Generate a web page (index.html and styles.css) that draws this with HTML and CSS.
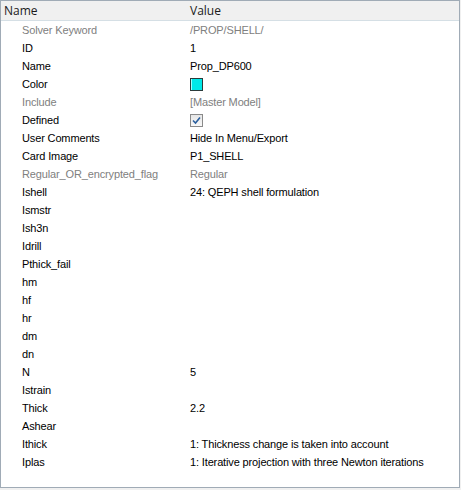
FILE: index.html
```html
<!DOCTYPE html>
<html lang="en">
<head>
  <meta charset="UTF-8">
  <title>Property Table</title>
  <link rel="stylesheet" href="styles.css">
</head>
<body>
  <div class="panel">
    <div class="head">
      <div class="col-name">Name</div>
      <div class="col-value">Value</div>
    </div>

    <div class="rows">
      <div class="row muted"><div class="col-name">Solver Keyword</div><div class="col-value">/PROP/SHELL/</div></div>
      <div class="row"><div class="col-name">ID</div><div class="col-value">1</div></div>
      <div class="row"><div class="col-name">Name</div><div class="col-value">Prop_DP600</div></div>
      <div class="row"><div class="col-name">Color</div><div class="col-value"><span class="swatch"></span></div></div>
      <div class="row muted"><div class="col-name">Include</div><div class="col-value">[Master Model]</div></div>
      <div class="row">
        <div class="col-name">Defined</div>
        <div class="col-value">
          <span class="check">
            <svg width="9" height="9" viewBox="0 0 9 9"><path d="M1 4.5 L3.5 7 L8 1.5" fill="none" stroke="#2a5f9e" stroke-width="1.6"/></svg>
          </span>
        </div>
      </div>
      <div class="row"><div class="col-name">User Comments</div><div class="col-value">Hide In Menu/Export</div></div>
      <div class="row"><div class="col-name">Card Image</div><div class="col-value">P1_SHELL</div></div>
      <div class="row muted"><div class="col-name">Regular_OR_encrypted_flag</div><div class="col-value">Regular</div></div>
      <div class="row"><div class="col-name">Ishell</div><div class="col-value">24: QEPH shell formulation</div></div>
      <div class="row"><div class="col-name">Ismstr</div><div class="col-value"></div></div>
      <div class="row"><div class="col-name">Ish3n</div><div class="col-value"></div></div>
      <div class="row"><div class="col-name">Idrill</div><div class="col-value"></div></div>
      <div class="row"><div class="col-name">Pthick_fail</div><div class="col-value"></div></div>
      <div class="row"><div class="col-name">hm</div><div class="col-value"></div></div>
      <div class="row"><div class="col-name">hf</div><div class="col-value"></div></div>
      <div class="row"><div class="col-name">hr</div><div class="col-value"></div></div>
      <div class="row"><div class="col-name">dm</div><div class="col-value"></div></div>
      <div class="row"><div class="col-name">dn</div><div class="col-value"></div></div>
      <div class="row"><div class="col-name">N</div><div class="col-value">5</div></div>
      <div class="row"><div class="col-name">Istrain</div><div class="col-value"></div></div>
      <div class="row"><div class="col-name">Thick</div><div class="col-value">2.2</div></div>
      <div class="row"><div class="col-name">Ashear</div><div class="col-value"></div></div>
      <div class="row"><div class="col-name">Ithick</div><div class="col-value">1: Thickness change is taken into account</div></div>
      <div class="row"><div class="col-name">Iplas</div><div class="col-value">1: Iterative projection with three Newton iterations</div></div>
    </div>
  </div>
</body>
</html>
```

FILE: styles.css
```css
body {
  margin: 0;
  background: #f0f0f0;
  font-family: "Liberation Sans", Arial, sans-serif;
  font-size: 11px;
  letter-spacing: -0.14px;
  color: #000;
}

.panel {
  width: 458px;
  height: 486px;
  background: #fff;
  border: 1px solid #a0abb6;
}

.head {
  display: flex;
  height: 19px;
  align-items: center;
  background: #f0f0f0;
  border-bottom: 1px solid #d5dfe5;
  font-family: "Open Sans", "Liberation Sans", sans-serif;
  font-size: 12px;
  letter-spacing: 0;
  color: #1a1a1a;
}

.head .col-name {
  padding-left: 3px;
  width: 186px;
}

.rows {
  padding-top: 0;
}

.row {
  display: flex;
  height: 18px;
  align-items: center;
}

.row .col-name {
  width: 168px;
  padding-left: 21px;
  white-space: nowrap;
}

.row .col-value {
  display: flex;
  align-items: center;
  white-space: nowrap;
}

.muted {
  color: #808080;
}

.swatch {
  display: inline-block;
  width: 11px;
  height: 11px;
  background: #00e8e8;
  border: 1px solid #2a3a3a;
  box-shadow: inset 1px 0 0 #9ff;
}

.check {
  display: inline-flex;
  align-items: center;
  justify-content: center;
  width: 11px;
  height: 11px;
  border: 1px solid #8a8a8a;
  background: linear-gradient(#e6e6e6, #f8f8f8);
}
```
